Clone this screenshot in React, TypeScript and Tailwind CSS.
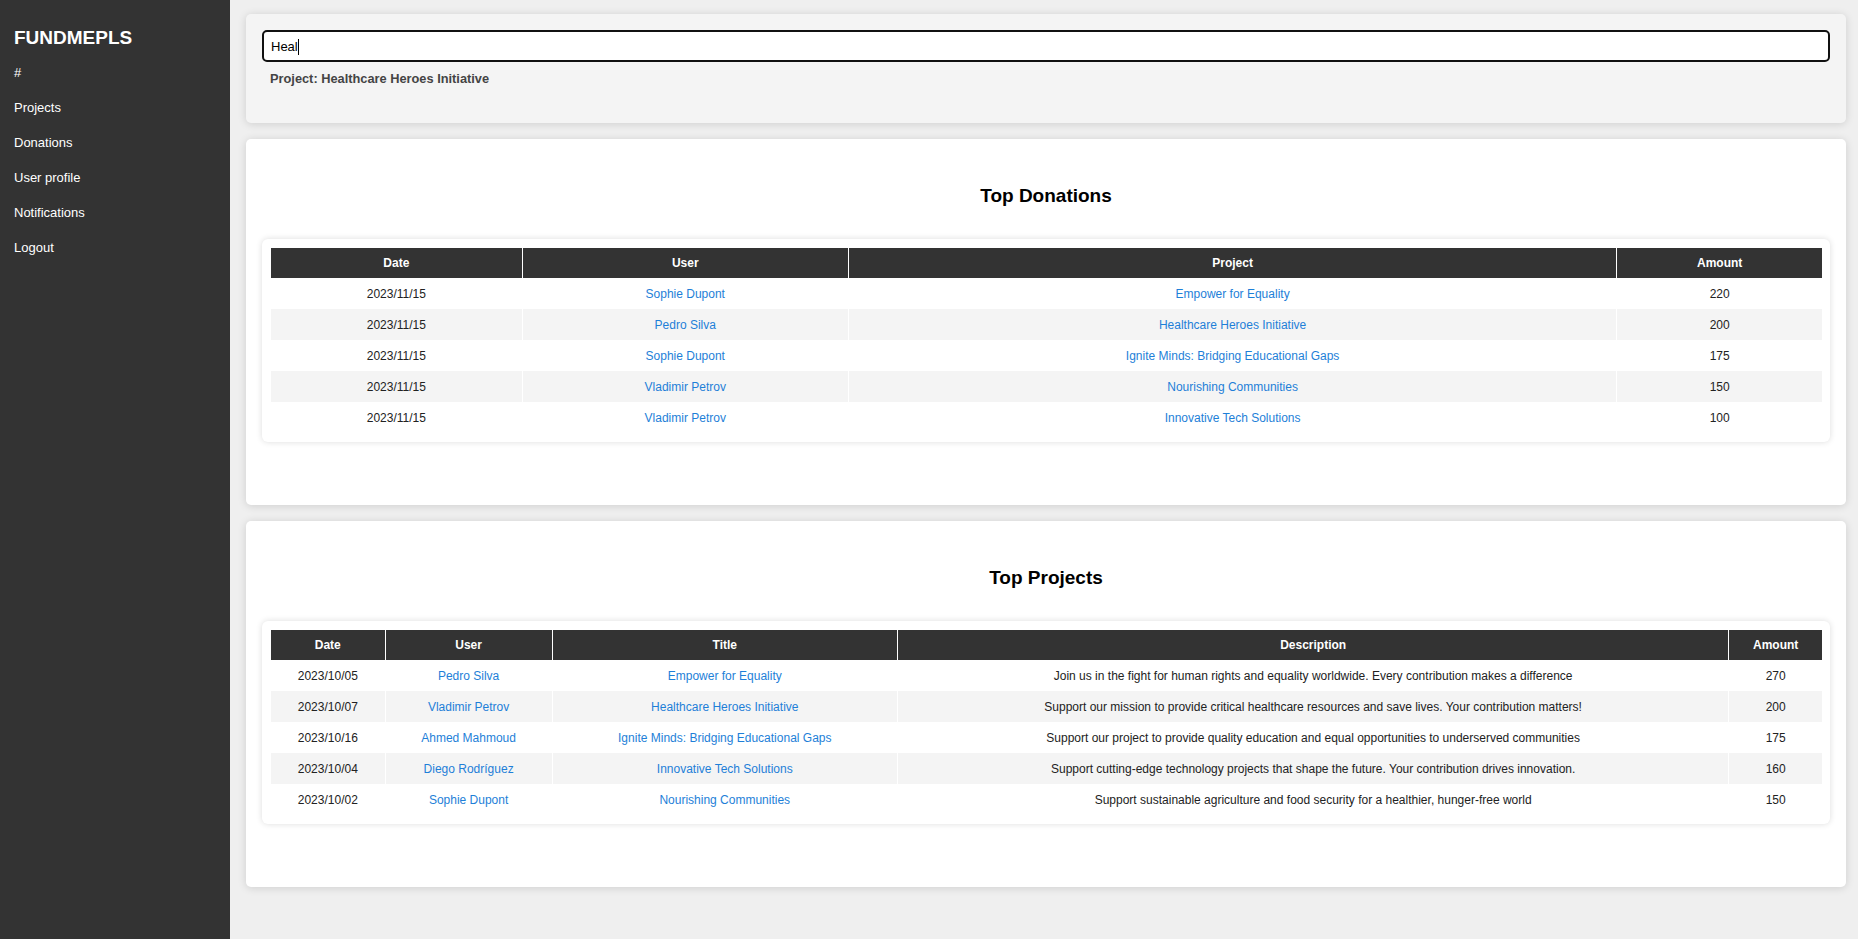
const navItems = ["#", "Projects", "Donations", "User profile", "Notifications", "Logout"];

const donations = [
  { date: "2023/11/15", user: "Sophie Dupont", project: "Empower for Equality", amount: 220 },
  { date: "2023/11/15", user: "Pedro Silva", project: "Healthcare Heroes Initiative", amount: 200 },
  { date: "2023/11/15", user: "Sophie Dupont", project: "Ignite Minds: Bridging Educational Gaps", amount: 175 },
  { date: "2023/11/15", user: "Vladimir Petrov", project: "Nourishing Communities", amount: 150 },
  { date: "2023/11/15", user: "Vladimir Petrov", project: "Innovative Tech Solutions", amount: 100 },
];

const projects = [
  {
    date: "2023/10/05",
    user: "Pedro Silva",
    title: "Empower for Equality",
    description: "Join us in the fight for human rights and equality worldwide. Every contribution makes a difference",
    amount: 270,
  },
  {
    date: "2023/10/07",
    user: "Vladimir Petrov",
    title: "Healthcare Heroes Initiative",
    description: "Support our mission to provide critical healthcare resources and save lives. Your contribution matters!",
    amount: 200,
  },
  {
    date: "2023/10/16",
    user: "Ahmed Mahmoud",
    title: "Ignite Minds: Bridging Educational Gaps",
    description: "Support our project to provide quality education and equal opportunities to underserved communities",
    amount: 175,
  },
  {
    date: "2023/10/04",
    user: "Diego Rodríguez",
    title: "Innovative Tech Solutions",
    description: "Support cutting-edge technology projects that shape the future. Your contribution drives innovation.",
    amount: 160,
  },
  {
    date: "2023/10/02",
    user: "Sophie Dupont",
    title: "Nourishing Communities",
    description: "Support sustainable agriculture and food security for a healthier, hunger-free world",
    amount: 150,
  },
];

const th = "h-[30px] p-0 bg-[#333333] text-white font-bold text-[12px] text-center border-r border-white last:border-r-0";
const td = "h-[31px] p-0 text-[12px] text-center border-r border-white last:border-r-0";
const link = "text-[#1e7fd8]";

function Sidebar() {
  return (
    <aside className="w-[230px] shrink-0 bg-[#333333] text-white pt-[27px] pl-[14px]">
      <h1 className="text-[19px] leading-[22px] font-bold">FUNDMEPLS</h1>
      <nav className="mt-[6px] flex flex-col">
        {navItems.map((item) => (
          <a key={item} href="#" className="text-[13px] leading-[35px] text-white">
            {item}
          </a>
        ))}
      </nav>
    </aside>
  );
}

function TableCard({ title, children }: { title: string; children: React.ReactNode }) {
  return (
    <section className="bg-white rounded-[5px] shadow-[0_1px_8px_rgba(0,0,0,0.14)] px-4 pt-[45px] pb-[63px]">
      <h2 className="text-[19px] leading-[23px] font-bold text-center text-black mb-[32px]">{title}</h2>
      <div className="bg-white rounded-[6px] shadow-[0_0_6px_rgba(0,0,0,0.14)] pt-[9px] pl-[9px] pr-[8px] pb-[9px]">
        <table className="w-full table-fixed border-collapse">{children}</table>
      </div>
    </section>
  );
}

export default function App() {
  return (
    <div className="flex min-h-screen bg-[#efefef] font-['Liberation_Sans',Arial,sans-serif] text-[#222]">
      <Sidebar />
      <main className="w-[1600px] ml-4 pt-[14px] flex flex-col gap-4">
        <section className="h-[109px] bg-[#f4f4f4] rounded-[5px] shadow-[0_1px_8px_rgba(0,0,0,0.14)] px-4 pt-4">
          <div className="h-[32px] bg-white border-2 border-[#111] rounded-[5px] flex items-center pl-[7px] pt-px">
            <span className="text-[13px] text-black">Heal</span>
            <span className="w-px h-[16px] bg-black" />
          </div>
          <p className="mt-[9px] pl-[8px] text-[12.8px] leading-[15px] font-bold text-[#444]">
            Project: Healthcare Heroes Initiative
          </p>
        </section>

        <TableCard title="Top Donations">
          <thead>
            <tr>
              <th className={`${th} w-[251px]`}>Date</th>
              <th className={`${th} w-[326px]`}>User</th>
              <th className={`${th} w-[768px]`}>Project</th>
              <th className={`${th} w-[205px]`}>Amount</th>
            </tr>
          </thead>
          <tbody>
            {donations.map((d, i) => (
              <tr key={i} className={i % 2 === 1 ? "bg-[#f4f4f4]" : "bg-white"}>
                <td className={td}>{d.date}</td>
                <td className={td}>
                  <a href="#" className={link}>{d.user}</a>
                </td>
                <td className={td}>
                  <a href="#" className={link}>{d.project}</a>
                </td>
                <td className={td}>{d.amount}</td>
              </tr>
            ))}
          </tbody>
        </TableCard>

        <TableCard title="Top Projects">
          <thead>
            <tr>
              <th className={`${th} w-[114px]`}>Date</th>
              <th className={`${th} w-[167px]`}>User</th>
              <th className={`${th} w-[345px]`}>Title</th>
              <th className={`${th} w-[831px]`}>Description</th>
              <th className={`${th} w-[93px]`}>Amount</th>
            </tr>
          </thead>
          <tbody>
            {projects.map((p, i) => (
              <tr key={i} className={i % 2 === 1 ? "bg-[#f4f4f4]" : "bg-white"}>
                <td className={td}>{p.date}</td>
                <td className={td}>
                  <a href="#" className={link}>{p.user}</a>
                </td>
                <td className={td}>
                  <a href="#" className={link}>{p.title}</a>
                </td>
                <td className={td}>{p.description}</td>
                <td className={td}>{p.amount}</td>
              </tr>
            ))}
          </tbody>
        </TableCard>
      </main>
    </div>
  );
}
